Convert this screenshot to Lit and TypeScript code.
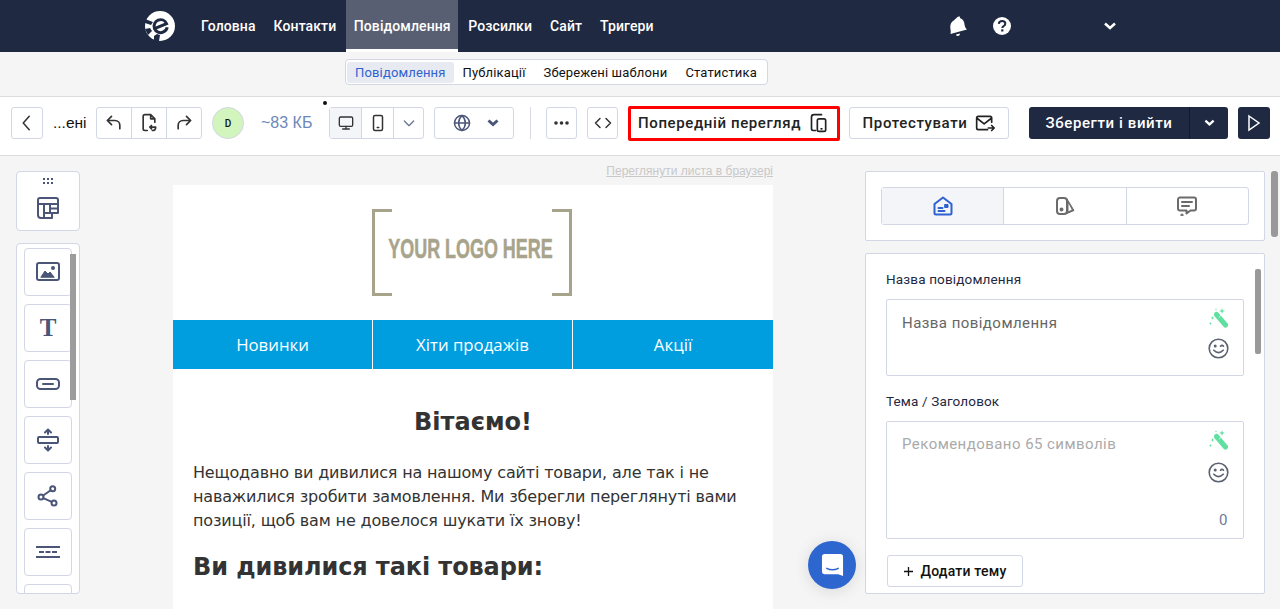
import { LitElement, html, css, svg } from "lit";
import { customElement } from "lit/decorators.js";

const icon = (w: number, h: number, body: unknown, vb = "0 0 24 24") => html`
  <svg width=${w} height=${h} viewBox=${vb} fill="none" stroke="currentColor" stroke-width="2"
    stroke-linecap="round" stroke-linejoin="round">${body}</svg>`;

const wand = () => html`
  <svg width="20" height="20" viewBox="0 0 20 20">
    <path d="M7.500 6.500 L16.500 17" stroke="#5fe0a0" stroke-width="5" stroke-linecap="round"/>
    <path d="M9.800 9.300 L12.600 6.900" stroke="#fff" stroke-width=".7"/>
    <path d="M13 0l.7 2.300 2.300.7-2.300.7-.7 2.300-.7-2.300-2.300-.7 2.300-.7zM3.500 8l.5 1.500 1.500.5-1.500.5-.5 1.500-.5-1.500L1.500 10l1.500-.5zM1.500 14l.4 1.100 1.100.4-1.100.4-.4 1.100-.4-1.100L0 15.500l1.100-.4zM7 0l.3 1 1 .3-1 .3-.3 1-.3-1-1-.3 1-.3z" fill="#5fe0a0"/>
  </svg>`;

const smile = () => html`
  <svg width="21" height="21" viewBox="0 0 21 21" fill="none" stroke="#5c6270" stroke-width="1.600" stroke-linecap="round">
    <circle cx="10.500" cy="10.500" r="9.300"/>
    <path d="M5.800 12.200 Q10.500 17 15.200 12.200"/>
    <circle cx="7.200" cy="8" r=".7" fill="#5c6270"/>
    <path d="M12.500 8.200 Q14 6.600 15.500 8.200"/>
  </svg>`;

@customElement("app-root")
export class AppRoot extends LitElement {
  static styles = css`
    :host {
      --ink: #4a5578;
      display: block;
      height: 609px;
      overflow: hidden;
      position: relative;
      background: #f5f5f5;
      font-family: Roboto, "Noto Sans", sans-serif;
      color: #1f2942;
    }
    svg { display: block; flex: none; }

    .top {
      height: 52px;
      background: #1f2942;
      display: flex;
      align-items: center;
      padding-left: 145px;
      color: #fff;
    }
    .logo { margin-right: 17px; }
    .menu { display: flex; height: 52px; }
    .menu a {
      padding: 0 9px;
      display: flex;
      align-items: center;
      font-size: 14px;
      font-weight: 500;
      letter-spacing: .1px;
      white-space: nowrap;
    }
    .menu a.on { margin: 0 1px; padding: 3px 7.500px 0; background: #595f73; border-bottom: 3px solid #fff; box-sizing: border-box; }
    .bell { margin-left: 285px; }
    .help { margin-left: 25px; }
    .caret { margin-left: 93px; }

    .subbar { height: 44px; display: flex; align-items: center; padding: 0 0 4px 345px; box-sizing: border-box; }
    .sub {
      display: flex;
      align-items: center;
      height: 26px;
      box-sizing: border-box;
      border: 1px solid #d3d6e4;
      border-radius: 4px;
      background: #fff;
      padding: 0 1px;
      font-size: 13px;
      color: #111;
    }
    .sub span { padding: 0 9px; height: 21px; line-height: 21px; white-space: nowrap; letter-spacing: .15px; }
    .sub .on { padding: 0 8px; background: #e8eaf2; color: #2f62cf; border-radius: 3px; }

    .tools {
      height: 60px;
      box-sizing: border-box;
      background: #fff;
      border-top: 1px solid #dcdcdc;
      border-bottom: 1px solid #dcdcdc;
      display: flex;
      align-items: center;
      position: relative;
      padding: 0 0 6px 11px;
    }
    .btn {
      height: 32px;
      box-sizing: border-box;
      border: 1px solid #d3d6e4;
      border-radius: 3px;
      background: #fff;
      display: flex;
      align-items: center;
      justify-content: center;
      color: #333;
      flex: none;
    }
    .back { width: 32px; }
    .square { width: 31px; }
    .gap-l { margin-left: 10px; }
    .group { display: flex; height: 32px; box-sizing: border-box; border: 1px solid #d3d6e4; border-radius: 3px; flex: none; color: #333; }
    .group > div { flex: 1; display: flex; align-items: center; justify-content: center; border-left: 1px solid #d3d6e4; }
    .group > div:first-child { border-left: 0; }
    .history { width: 106px; }
    .devices { width: 95px; }
    .devices > .dev { flex: none; width: 31px; }
    .devices > .sel { background: #f4f5f8; }
    .devices > .more { color: #6b7592; }
    .lang { width: 80px; margin-left: 10px; color: var(--ink); }
    .lang > div { gap: 16px; padding-left: 3px; }
    .name { width: 34px; margin: 0 9px 0 10px; font: 15.500px "Liberation Sans", sans-serif; color: #111; white-space: nowrap; }
    .avatar {
      width: 32px; height: 32px; border-radius: 50%;
      background: #d2f5bd; border: 1px solid #d3d6e4; box-sizing: border-box;
      display: flex; align-items: center; justify-content: center;
      font-size: 10px; font-weight: 500; color: #111; margin-left: 10px;
    }
    .size { margin-left: 17px; width: 68px; font: 16px "Liberation Sans", sans-serif; color: #6e87b8; white-space: nowrap; }
    .dot { position: absolute; left: 323px; top: 4px; width: 4px; height: 4px; border-radius: 50%; background: #111; }
    .divider { width: 1px; height: 32px; background: #d8dae4; margin: 0 15px 0 16px; flex: none; }
    .red {
      width: 212px; height: 35px; box-sizing: border-box;
      border: 3px solid #f00; border-radius: 2px;
      display: flex; align-items: center; gap: 8px;
      padding-left: 7px; margin-left: 10px;
      font-size: 15px; font-weight: 500; color: #222; letter-spacing: .62px;
      white-space: nowrap; flex: none;
    }
    .test {
      width: 160px; margin-left: 9px; gap: 8px;
      font-size: 15px; font-weight: 500; color: #222; letter-spacing: .6px;
    }
    .save {
      margin-left: 20px; width: 199px; height: 32px; display: flex; flex: none;
      background: #1f2942; color: #fff; border-radius: 3px;
      font-size: 15px; font-weight: 500; letter-spacing: .6px;
    }
    .save div { display: flex; align-items: center; justify-content: center; }
    .save .l { width: 160px; border-right: 1px solid #12192c; }
    .save .r { flex: 1; }
    .play { margin-left: 10px; width: 32px; height: 32px; background: #1f2942; color: #fff; border-radius: 3px; display: flex; align-items: center; justify-content: center; flex: none; }

    .main { display: flex; height: 453px; padding-left: 16px; position: relative; }
    .left { width: 64px; flex: none; padding-top: 15px; }
    .card { background: #fff; border: 1px solid #d3d6e4; border-radius: 4px; box-sizing: border-box; }
    .drag { height: 60px; display: flex; flex-direction: column; align-items: center; padding-top: 6px; gap: 11px; color: var(--ink); }
    .blocks {
      margin-top: 12px; height: 351px; overflow: hidden; position: relative;
      padding: 4px 7px 0; display: flex; flex-direction: column; gap: 8px;
    }
    .block {
      width: 48px; height: 48px; flex: none; box-sizing: border-box;
      border: 1px solid #d3d6e4; border-radius: 4px;
      display: flex; align-items: center; justify-content: center; color: var(--ink);
    }
    .block.t { font: bold 25px "Liberation Serif", serif; }
    .thumb { position: absolute; left: 53px; top: 10px; width: 6px; height: 146px; background: #9c9c9c; }

    .canvas { width: 600px; flex: none; margin-left: 93px; }
    .view {
      height: 29px; text-align: right; font: 12px "Liberation Sans", sans-serif;
      color: #c8c8c8; text-decoration: underline; padding-top: 8px; box-sizing: border-box;
    }
    .mail { background: #fff; height: 424px; font-family: "DejaVu Sans", Verdana, sans-serif; color: #333; }
    .logo-box { height: 135px; display: flex; align-items: center; justify-content: center; padding-right: 2px; box-sizing: border-box; }
    .brackets {
      width: 200px; height: 87px; box-sizing: border-box; position: relative;
      display: flex; align-items: center; justify-content: center;
      color: #a8a48c; font: bold 27.600px "Liberation Sans", sans-serif;
    }
    .brackets span { white-space: nowrap; transform: scaleX(.65); flex: none; margin: 0 4px 8px 0; -webkit-text-stroke: .5px #a8a48c; }
    .brackets i { position: absolute; top: 0; bottom: 0; width: 20px; border: solid #a8a48c; border-width: 3px; box-sizing: border-box; }
    .brackets i.a { left: 0; border-right: 0; }
    .brackets i.b { right: 0; border-left: 0; }
    .mail-nav { display: grid; grid-template-columns: 199px 200px 201px; height: 49px; background: #009ddf; color: #fff; font: 16.800px "Open Sans", sans-serif; }
    .mail-nav div { display: flex; align-items: center; justify-content: center; border-left: 1px solid #fff; }
    .mail-nav div:first-child { border-left: 0; }
    .mail-body { padding: 37px 20px 0; }
    h1 { margin: 0; font-size: 24px; line-height: 32px; text-align: center; color: #333; }
    p { margin: 23px 0 0; font-size: 16px; line-height: 24px; letter-spacing: -.16px; }
    h2 { margin: 18px 0 0; font-size: 24px; line-height: 32px; color: #333; letter-spacing: -.1px; }

    .right { width: 400px; flex: none; margin-left: 92px; padding-top: 15px; }
    .kinds { height: 70px; padding: 15px; border-radius: 2px; }
    .tabs { display: flex; height: 38px; border: 1px solid #d3d6e4; border-radius: 3px; box-sizing: border-box; }
    .tabs div { flex: 1; display: flex; align-items: center; justify-content: center; border-left: 1px solid #d3d6e4; color: #6b6b6b; }
    .tabs div:first-child { border-left: 0; background: #f4f5f8; color: #2d62d0; }
    .form { margin-top: 12px; height: 341px; padding: 16px 20px 0; position: relative; border-radius: 2px; overflow: hidden; }
    label { display: block; font-size: 13.500px; line-height: 18px; color: #1f2942; letter-spacing: .15px; }
    .field {
      margin-top: 11px; width: 358px; box-sizing: border-box; border: 1px solid #d3d6e4; border-radius: 2px;
      position: relative; padding: 14px 15px; font-size: 15px; line-height: 18px; letter-spacing: .45px; color: #666;
    }
    .f1 { height: 77px; margin-bottom: 16px; }
    .f2 { height: 118px; color: #aaa; padding-top: 13px; }
    .side { position: absolute; right: 14px; top: 8px; display: flex; flex-direction: column; gap: 10px; align-items: center; }
    .f2 .side { gap: 12px; }
    .count { position: absolute; right: 15px; bottom: 9px; font-size: 15px; color: #6e7a99; }
    .add {
      margin: 16px 0 0 1px; width: 136px; height: 32px; font-size: 14px; font-weight: 500; color: #111;
      gap: 8px; letter-spacing: .2px;
    }
    .form-thumb { position: absolute; right: 3px; top: 15px; width: 6px; height: 85px; background: #999; border-radius: 2px; }
    .page-thumb { position: absolute; right: 2px; top: 171px; width: 7px; height: 66px; background: #999; border-radius: 3px; }
    .chat {
      position: absolute; left: 808px; top: 541px; width: 48px; height: 48px; border-radius: 50%;
      background: #2d66cf; display: flex; align-items: center; justify-content: center;
      box-shadow: 0 2px 16px rgba(0, 0, 0, .12);
    }
  `;

  render() {
    return html`
      <div class="top">
        <svg class="logo" width="30" height="30" viewBox="0 0 30 30">
          <circle cx="15" cy="15" r="15" fill="#fff"/>
          <g transform="rotate(-22 16 15)" fill="none" stroke="#1f2942" stroke-width="3">
            <path d="M9 15h13c0-4-3-6.500-6.500-6.500S9 11.500 9 15s3 6.500 6.500 6.500c2.500 0 4.500-1 5.800-3"/>
          </g>
          <path d="M0 8l8 3-2 3-6-2zM0 18l5-1 2 3-4 4zM9 25l3-2 3 1-1 6h-5z" fill="#1f2942"/>
        </svg>
        <div class="menu">
          <a>Головна</a><a>Контакти</a><a class="on">Повідомлення</a><a>Розсилки</a><a>Сайт</a><a>Тригери</a>
        </div>
        <svg class="bell" width="20" height="20" viewBox="0 0 20 20" fill="#fff">
          <path d="M9 1.500 11 .8l.8 2c3 1 4 3.500 4.200 6 .3 2.500 1 4 2.500 5.200L2 18.500c.5-2 .2-3.500-.2-6-.3-3 .7-6 3.700-7.700z" transform="translate(.5 -.5)"/>
          <path d="M8 18.500l4-1c0 1.500-1 2.500-2 2.500s-1.800-.5-2-1.500z"/>
        </svg>
        <svg class="help" width="18" height="18" viewBox="0 0 18 18">
          <circle cx="9" cy="9" r="9" fill="#fff"/>
          <path d="M5.800 6.800C6 5 7.400 4 9.100 4c1.800 0 3.200 1.100 3.200 2.700 0 2.300-3 2.300-3 4.300" fill="none" stroke="#1f2942" stroke-width="2"/>
          <rect x="8.200" y="12.300" width="2.200" height="2.200" fill="#1f2942"/>
        </svg>
        <svg class="caret" width="12" height="8" viewBox="0 0 12 8" fill="none" stroke="#fff" stroke-width="2.500"><path d="M1 1.500l5 4.500 5-4.500"/></svg>
      </div>

      <div class="subbar">
        <div class="sub">
          <span class="on">Повідомлення</span><span>Публікації</span><span>Збережені шаблони</span><span>Статистика</span>
        </div>
      </div>

      <div class="tools">
        <div class="btn back">${icon(18, 18, svg`<path d="M15 3l-8 9 8 9"/>`)}</div>
        <div class="name">...ені</div>
        <div class="group history">
          <div>${icon(20, 20, svg`<path d="M9 4L4 9l5 5M4 9h9c4 0 6 3 6 6v4"/>`)}</div>
          <div>${icon(20, 20, svg`<path d="M10 21H7a2 2 0 0 1-2-2V4a2 2 0 0 1 2-2h7l5 5v4M14 2v5h5M14 17h6c0 2-1.500 4-4 4M15 15l-2 2 2 2"/>`)}</div>
          <div>${icon(20, 20, svg`<path d="M15 4l5 5-5 5M20 9h-9c-4 0-6 3-6 6v4"/>`)}</div>
        </div>
        <div class="avatar">D</div>
        <div class="size">~83 КБ</div>
        <div class="dot"></div>
        <div class="group devices">
          <div class="dev sel">${icon(16, 16, svg`<rect x="2" y="3" width="20" height="14" rx="2"/><path d="M12 17v4M7 21h10"/>`)}</div>
          <div class="dev">${icon(18, 18, svg`<rect x="6" y="2" width="12" height="20" rx="2"/><path d="M11 18h2"/>`)}</div>
          <div class="more">${icon(16, 16, svg`<path d="M5 9l7 7 7-7"/>`)}</div>
        </div>
        <div class="group lang">
          <div>
            ${icon(18, 18, svg`<circle cx="12" cy="12" r="10"/><path d="M2 12h20M12 2c-6 6-6 14 0 20M12 2c6 6 6 14 0 20"/>`)}
            <svg width="12" height="8" viewBox="0 0 12 8" fill="none" stroke="currentColor" stroke-width="3"><path d="M1.500 1.500l4.500 4 4.500-4"/></svg>
          </div>
        </div>
        <div class="divider"></div>
        <div class="btn square">
          <svg width="15" height="4" viewBox="0 0 15 4" fill="#333"><circle cx="2" cy="2" r="1.800"/><circle cx="7.500" cy="2" r="1.800"/><circle cx="13" cy="2" r="1.800"/></svg>
        </div>
        <div class="btn square gap-l">${icon(18, 18, svg`<path d="M8 6l-6 6 6 6M16 6l6 6-6 6"/>`)}</div>
        <div class="red">Попередній перегляд
          ${icon(20, 20, svg`<path d="M8 21H5a2 2 0 0 1-2-2V5a3 3 0 0 1 3-3h9"/><rect x="10" y="7" width="10" height="15" rx="2"/><path d="M14.500 19h1"/>`)}
        </div>
        <div class="btn test">Протестувати
          ${icon(20, 20, svg`<path d="M20 11V6a2 2 0 0 0-2-2H4a2 2 0 0 0-2 2v12a2 2 0 0 0 2 2h11M2 6l9 7 9-7M16 18h7M20 15l3 3-3 3"/>`)}
        </div>
        <div class="save">
          <div class="l">Зберегти і вийти</div>
          <div class="r"><svg width="11" height="8" viewBox="0 0 12 8" fill="none" stroke="#fff" stroke-width="2.500"><path d="M1.500 1.500l4.500 4 4.500-4"/></svg></div>
        </div>
        <div class="play"><svg width="14" height="18" viewBox="0 0 14 18" fill="none" stroke="#fff" stroke-width="1.500"><path d="M2 2l10 7-10 7z"/></svg></div>
      </div>

      <div class="main">
        <div class="left">
          <div class="card drag">
            <svg width="11" height="7" viewBox="0 0 11 7" fill="currentColor">
              <rect x="0" y="0" width="2" height="2"/><rect x="4" y="0" width="2" height="2"/><rect x="8" y="0" width="2" height="2"/>
              <rect x="0" y="4" width="2" height="2"/><rect x="4" y="4" width="2" height="2"/><rect x="8" y="4" width="2" height="2"/>
            </svg>
            ${icon(24, 24, svg`<path d="M2 4a2 2 0 0 1 2-2h16a2 2 0 0 1 2 2v4H2zM2 8v11a3 3 0 0 0 3 3h11v-5M8 8v14M14 8v9h8V8M14 12.500h8M8 17h6"/>`)}
          </div>
          <div class="card blocks">
            <div class="block">${icon(26, 26, svg`<rect x="2" y="4" width="22" height="17" rx="2"/><path d="M6 18l4-6 3 3 2-2 4 5z" fill="currentColor" stroke-width="1"/><circle cx="18" cy="9" r="1" fill="currentColor"/>`, "0 0 26 26")}</div>
            <div class="block t">T</div>
            <div class="block">${icon(26, 26, svg`<rect x="2" y="8" width="22" height="10" rx="3.500"/><path d="M8 13h10"/>`, "0 0 26 26")}</div>
            <div class="block">${icon(26, 26, svg`<rect x="3" y="10" width="20" height="6" rx="1"/><path d="M13 7V3M10 5.500l3-3 3 3M13 19v4M10 20.500l3 3 3-3"/>`, "0 0 26 26")}</div>
            <div class="block">${icon(24, 24, svg`<circle cx="5" cy="13" r="2.500"/><circle cx="16.700" cy="4.700" r="2.500"/><circle cx="18" cy="19" r="2.500"/><path d="M7.200 11.500l7.500-5.300M7.300 14.200l8.400 3.700"/>`)}</div>
            <div class="block">
              <svg width="26" height="26" viewBox="0 0 26 26" fill="none" stroke="currentColor" stroke-width="2">
                <path d="M1 8h24M1 18h24M4 13h5M10.500 13h5M17 13h5"/>
              </svg>
            </div>
            <div class="block"></div>
            <div class="thumb"></div>
          </div>
        </div>

        <div class="canvas">
          <div class="view">Переглянути листа в браузері</div>
          <div class="mail">
            <div class="logo-box">
              <div class="brackets"><i class="a"></i><i class="b"></i><span>YOUR LOGO HERE</span></div>
            </div>
            <div class="mail-nav"><div>Новинки</div><div>Хіти продажів</div><div>Акції</div></div>
            <div class="mail-body">
              <h1>Вітаємо!</h1>
              <p>Нещодавно ви дивилися на нашому сайті товари, але так і не наважилися зробити замовлення. Ми зберегли переглянуті вами позиції, щоб вам не довелося шукати їх знову!</p>
              <h2>Ви дивилися такі товари:</h2>
            </div>
          </div>
        </div>

        <div class="right">
          <div class="card kinds">
            <div class="tabs">
              <div>${icon(20, 20, svg`<path d="M1.500 8L10 1.500 18.500 8v9a1.500 1.500 0 0 1-1.500 1.500H3A1.500 1.500 0 0 1 1.500 17z"/><path d="M5.500 12h4M5.500 15h6"/><rect x="12" y="8.500" width="3" height="3" fill="currentColor" stroke-width="1"/>`, "0 0 20 20")}</div>
              <div>${icon(20, 20, svg`<rect x="2" y="2" width="10" height="16" rx="3"/><circle cx="6.500" cy="13.500" r="1" fill="currentColor"/><path d="M12 3l7 11.500-7 3z" fill="currentColor" stroke-width="1"/><path d="M13.500 7.500l3.300 6.300-3.300 1.400z" fill="#fff" stroke="none"/>`, "0 0 20 20")}</div>
              <div>${icon(20, 20, svg`<path d="M3 1.500h14a2 2 0 0 1 2 2v9a2 2 0 0 1-2 2h-3.500L9.500 17.500v-3H3a2 2 0 0 1-2-2v-9a2 2 0 0 1 2-2zM5 6h10M5 10h7"/><circle cx="5" cy="19" r=".6" fill="currentColor"/>`, "0 0 20 20")}</div>
            </div>
          </div>
          <div class="card form">
            <label>Назва повідомлення</label>
            <div class="field f1">Назва повідомлення
              <div class="side">${wand()}${smile()}</div>
            </div>
            <label>Тема / Заголовок</label>
            <div class="field f2">Рекомендовано 65 символів
              <div class="side">${wand()}${smile()}</div>
              <div class="count">0</div>
            </div>
            <div class="btn add">
              <svg width="9" height="9" viewBox="0 0 9 9" stroke="#111" stroke-width="1.300"><path d="M4.500 0v9M0 4.500h9"/></svg>
              Додати тему
            </div>
            <div class="form-thumb"></div>
          </div>
        </div>
      </div>

      <div class="page-thumb"></div>
      <div class="chat">
        <svg width="23" height="25" viewBox="0 0 24 26">
          <path d="M4 1h16a3 3 0 0 1 3 3v20l-5-2H4a3 3 0 0 1-3-3V4a3 3 0 0 1 3-3z" fill="#fff"/>
          <path d="M6 16q6 3 12 0" fill="none" stroke="#2d66cf" stroke-width="1.500" stroke-linecap="round"/>
        </svg>
      </div>
    `;
  }
}
